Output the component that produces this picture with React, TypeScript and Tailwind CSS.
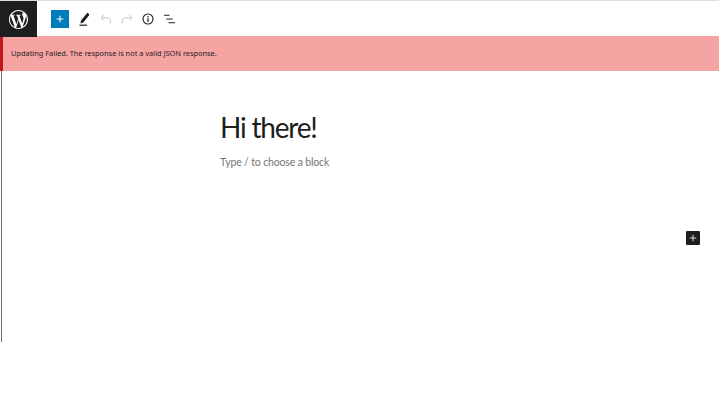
import { Plus } from "lucide-react";

function WpLogo() {
  return (
    <svg viewBox="2 2 20 20" className="h-[19px] w-[19px]" fill="#fff">
      <path d="M12 2C6.500 2 2 6.500 2 12s4.500 10 10 10 10-4.500 10-10S17.500 2 12 2zM3 12c0-1.300.3-2.500.8-3.700l4.300 11.700C5 18.600 3 15.500 3 12zm9 9c-.9 0-1.700-.1-2.500-.4l2.700-7.800 2.700 7.600c0 .1 0 .1.100.1-.9.300-1.900.5-3 .5zm1.200-13.200c.5 0 1-.1 1-.1.500-.1.400-.8-.1-.7 0 0-1.400.1-2.300.1-.8 0-2.200-.1-2.200-.1-.5 0-.6.700-.1.700 0 0 .4.100.9.100l1.300 3.700-1.900 5.600-3.100-9.300c.5 0 1-.1 1-.1.500-.1.400-.8-.1-.7 0 0-1.400.1-2.300.1h-.5C6.900 4.200 9.300 3 12 3c2 0 3.900.8 5.300 2h-.1c-.8 0-1.400.7-1.400 1.500 0 .7.400 1.300.8 2 .3.600.7 1.300.7 2.300 0 .7-.3 1.500-.6 2.700l-.8 2.700-3-8.400zm3.200 11.900l2.700-7.900c.5-1.300.7-2.300.7-3.200 0-.3 0-.6-.1-.9.700 1.300 1.100 2.800 1.100 4.300.100 3.300-1.700 6.200-4.400 7.700z" />
    </svg>
  );
}

function Toolbar() {
  return (
    <div className="flex h-[35px] items-center bg-white">
      <div className="flex h-[36px] w-[37px] shrink-0 items-center justify-center self-start bg-[#1e1e1e]">
        <WpLogo />
      </div>
      <div className="ml-[14px] flex h-[18px] w-[18px] items-center justify-center bg-[#007cba]">
        <Plus size={10} color="#fff" strokeWidth={2.500} />
      </div>
      <svg viewBox="0 0 14 14" className="ml-[9px] h-[14px] w-[14px]">
        <path d="M3 8.500 8.800 1.500c.5-.5 1-.5 1.500-.1l.6.5c.4.400.4 1 0 1.500L5.200 10.500l-2.700 1z" fill="#1e1e1e" />
        <path d="M1.500 13.200h7.500" stroke="#1e1e1e" strokeWidth="1.200" />
      </svg>
      <svg viewBox="0 0 12 10" className="ml-[8px] h-[10px] w-[12px]" fill="none" stroke="#c8c8c8" strokeWidth="1">
        <path d="M4 1 1.200 3.800 4 6.600M1.500 3.800h6c1.800 0 3 1.200 3 3v2.500" />
      </svg>
      <svg viewBox="0 0 12 10" className="ml-[9px] h-[10px] w-[12px]" fill="none" stroke="#c8c8c8" strokeWidth="1">
        <path d="M8 1l2.800 2.800L8 6.600M10.500 3.800h-6c-1.800 0-3 1.200-3 3v2.500" />
      </svg>
      <svg viewBox="0 0 12 12" className="ml-[9px] h-[12px] w-[12px]" fill="none" stroke="#1e1e1e">
        <circle cx="6" cy="6" r="5" strokeWidth="1.100" />
        <path d="M6 5v4M6 3v1.300" strokeWidth="1.200" />
      </svg>
      <svg viewBox="0 0 12 10" className="ml-[10px] h-[10px] w-[11px]" fill="none" stroke="#1e1e1e" strokeWidth="1.100">
        <path d="M0 1h6M2.500 5h7M5 9h7" />
      </svg>
    </div>
  );
}

export default function App() {
  return (
    <div className="h-[409px] w-[719px] overflow-hidden bg-white font-['Lato','Noto_Sans',sans-serif]">
      <div className="h-px bg-[#dcdcdc]" />
      <Toolbar />
      <div className="flex h-[35px] items-center border-l-[3px] border-[#c01818] bg-[#f5a3a3] pl-2 pt-px font-['Noto_Sans',sans-serif] text-[7.400px] text-[#1e1e1e]">
        Updating Failed. The response is not a valid JSON response.
      </div>
      <div className="ml-px h-[271px] border-l border-[#6c6c6c]">
        <div className="pl-[218px] pt-[38px]">
          <h1 className="text-[28px] leading-[36px] tracking-[-1.200px] text-[#1e1e1e]">Hi there!</h1>
          <p className="mt-[9px] text-[10.500px] leading-[16px] tracking-[-0.150px] text-[#757575]">Type / to choose a block</p>
        </div>
        <div className="flex justify-end pr-[19px] pt-[61px]">
          <div className="flex h-[14px] w-[14px] items-center justify-center rounded-[1px] bg-[#1e1e1e]">
            <Plus size={10} color="#fff" strokeWidth={2} />
          </div>
        </div>
      </div>
    </div>
  );
}
